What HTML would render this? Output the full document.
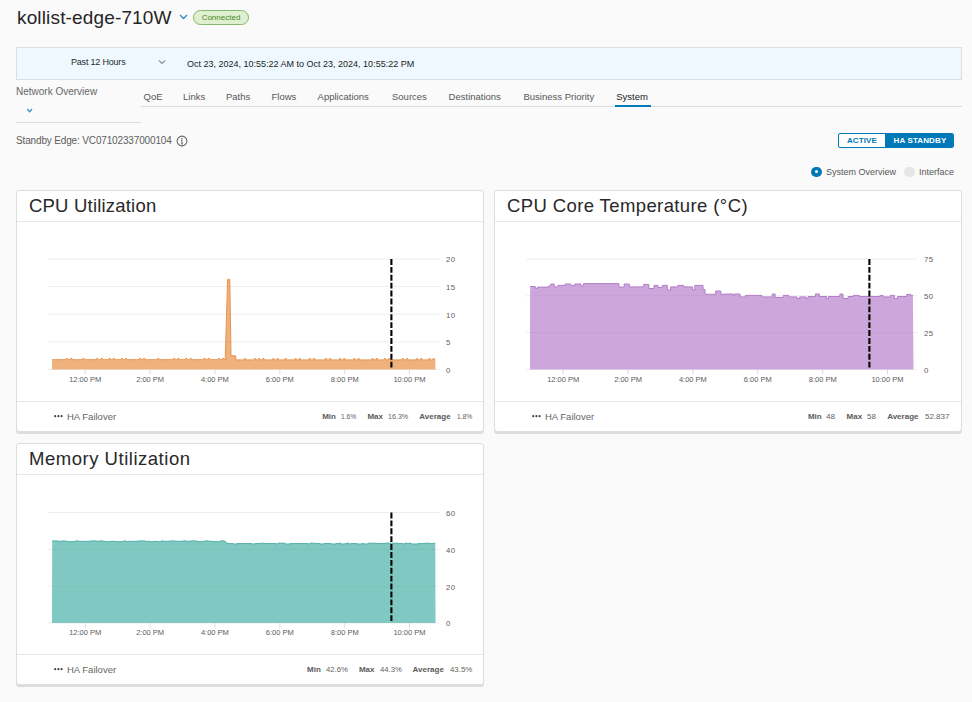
<!DOCTYPE html>
<html><head><meta charset="utf-8"><style>
*{margin:0;padding:0;box-sizing:border-box}
html,body{width:972px;height:702px;overflow:hidden;background:#fafafa;font-family:"Liberation Sans",sans-serif;color:#565656}
.abs{position:absolute;white-space:nowrap}
#title{left:17px;top:7px;font-size:19px;color:#262626;letter-spacing:0.15px}
#tchev{left:179px;top:13px}
#badge{left:193px;top:10px;width:56px;height:15px;border:1px solid #86b76a;border-radius:8px;background:#dff0d0;color:#4a8628;font-size:8px;line-height:13px;text-align:center}
#datebar{left:16px;top:47px;width:946px;height:33px;border:1px solid #d9dee2;background:#eef8fe}
#past{left:71px;top:57px;font-size:9px;color:#2b2b2b;letter-spacing:-0.2px}
#dchev{left:158px;top:59px}
#range{left:187px;top:58.5px;font-size:9px;color:#222}
#netov{left:16px;top:86px;font-size:10px;color:#666}
#nchev{left:26px;top:107px}
#nline{left:16px;top:122px;width:125px;height:1px;background:#dcdcdc}
#tabline{left:141px;top:106px;width:821px;height:1px;background:#dcdcdc}
.tab{top:91px;font-size:9.5px;color:#565656}
#sysline{left:615px;top:105px;width:36px;height:2px;background:#0079b8}
#standby{left:16px;top:134.5px;font-size:10px;letter-spacing:-0.15px;color:#5e5e5e}
#info{left:175.8px;top:134.7px}
#btng{left:838px;top:133px;width:116px;height:15px;border:1px solid #0079b8;border-radius:2px;background:#fff;overflow:hidden}
#btng .a{position:absolute;left:0;top:0;width:46px;height:13px;color:#0079b8;font-size:8px;font-weight:bold;letter-spacing:0.12px;line-height:13px;text-align:center}
#btng .s{position:absolute;left:46px;top:0;width:70px;height:13px;background:#0079b8;color:#fff;font-size:8px;font-weight:bold;letter-spacing:0.12px;line-height:13px;text-align:center}
#r1{left:811px;top:166.5px;width:10.5px;height:10.5px;border-radius:50%;background:#0079b8}
#r1:after{content:"";position:absolute;left:3.75px;top:3.75px;width:3px;height:3px;border-radius:50%;background:#fff}
#r1t{left:826px;top:166.5px;font-size:9px;color:#565656}
#r2{left:904px;top:166.5px;width:10.5px;height:10.5px;border-radius:50%;background:#e6e6e6}
#r2t{left:919px;top:166.5px;font-size:9px;color:#565656}
.card{position:absolute;width:468px;height:242px;background:#fff;border:1px solid #dddddd;border-radius:3px;box-shadow:0 2px 0 #dddddd}
.ctitle{position:absolute;left:12px;top:4px;font-size:18.5px;color:#282828;white-space:nowrap}
.sep1{position:absolute;left:0;top:30px;width:466px;height:1px;background:#e8e8e8}
.sep2{position:absolute;left:0;top:210px;width:466px;height:1px;background:#e8e8e8}
.yl{font-size:7.8px;letter-spacing:0.4px;fill:#606060;font-family:"Liberation Sans",sans-serif}
.xl{font-size:7.5px;fill:#5a5a5a;font-family:"Liberation Sans",sans-serif;text-anchor:middle}
.fail{position:absolute;left:50px;top:220px;font-size:9.5px;color:#666;white-space:nowrap}
.dots{position:absolute;left:37px;top:224px}
.sb,.sv{position:absolute;top:221.7px;font-size:8px;line-height:8px;white-space:nowrap;font-style:normal}
.sb{color:#5a5a5a;font-weight:bold}
.sv{color:#626262;transform-origin:0 50%}

</style></head><body>
<div id="title" class="abs">kollist-edge-710W</div>
<svg id="tchev" class="abs" width="9" height="8" viewBox="0 0 9 8"><path d="M1,2 L4.5,5.5 L8,2" fill="none" stroke="#2f8fc0" stroke-width="1.3"/></svg>
<div id="badge" class="abs">Connected</div>
<div id="datebar" class="abs"></div>
<div id="past" class="abs">Past 12 Hours</div>
<svg id="dchev" class="abs" width="8" height="7" viewBox="0 0 8 7"><path d="M1,1.5 L4,4.5 L7,1.5" fill="none" stroke="#444" stroke-width="1"/></svg>
<div id="range" class="abs">Oct 23, 2024, 10:55:22 AM to Oct 23, 2024, 10:55:22 PM</div>
<div id="netov" class="abs">Network Overview</div>
<svg id="nchev" class="abs" width="8" height="7" viewBox="0 0 8 7"><path d="M1.2,2 L3.6,4.7 L6,2" fill="none" stroke="#3d95c8" stroke-width="1.3"/></svg>
<div id="nline" class="abs"></div>
<div id="tabline" class="abs"></div>
<div class="abs tab" style="left:143.6px">QoE</div>
<div class="abs tab" style="left:183px">Links</div>
<div class="abs tab" style="left:226px">Paths</div>
<div class="abs tab" style="left:271.5px">Flows</div>
<div class="abs tab" style="left:317.6px">Applications</div>
<div class="abs tab" style="left:392px">Sources</div>
<div class="abs tab" style="left:448.6px">Destinations</div>
<div class="abs tab" style="left:523.5px">Business Priority</div>
<div class="abs tab" style="left:616.2px;color:#1b1b1b">System</div>
<div id="sysline" class="abs"></div>
<div id="standby" class="abs">Standby Edge: VC07102337000104</div>
<svg id="info" class="abs" width="12" height="12" viewBox="0 0 12 12"><circle cx="6" cy="6" r="4.9" fill="none" stroke="#666" stroke-width="1.1"/><circle cx="6" cy="3.7" r="0.8" fill="#666"/><path d="M5.1,5.3 H6 V9" fill="none" stroke="#666" stroke-width="1"/><path d="M5,8.9 H7" fill="none" stroke="#666" stroke-width="0.9"/></svg>
<div id="btng" class="abs"><div class="a">ACTIVE</div><div class="s">HA STANDBY</div></div>
<div id="r1" class="abs"></div><div id="r1t" class="abs">System Overview</div>
<div id="r2" class="abs"></div><div id="r2t" class="abs">Interface</div>

<div class="card" style="left:16px;top:190px"><div class="ctitle" style="letter-spacing:0.2px">CPU Utilization</div><div class="sep1"></div><svg class="ch" width="468" height="242" viewBox="0 0 468 242" style="position:absolute;left:-1px;top:-1px">
<g>
<line x1="32" y1="69.0" x2="423.5" y2="69.0" stroke="#ededed" stroke-width="1"/>
<text x="430" y="72.3" class="yl">20</text>
<line x1="32" y1="96.6" x2="423.5" y2="96.6" stroke="#ededed" stroke-width="1"/>
<text x="430" y="99.9" class="yl">15</text>
<line x1="32" y1="124.2" x2="423.5" y2="124.2" stroke="#ededed" stroke-width="1"/>
<text x="430" y="127.5" class="yl">10</text>
<line x1="32" y1="151.9" x2="423.5" y2="151.9" stroke="#ededed" stroke-width="1"/>
<text x="430" y="155.2" class="yl">5</text>
<line x1="32" y1="179.5" x2="423.5" y2="179.5" stroke="#ededed" stroke-width="1"/>
<text x="430" y="182.8" class="yl">0</text>
<path d="M36.0,179.5 L36.2,169.7 L50.2,169.7 L50.6,168.4 L51.8,168.4 L52.2,169.7 L54.4,169.7 L54.8,168.4 L56.0,168.4 L56.4,169.7 L56.4,169.7 L66.4,169.7 L66.8,168.4 L68.0,168.4 L68.4,169.7 L68.4,169.7 L80.4,169.7 L80.8,168.4 L82.0,168.4 L82.4,169.7 L84.6,169.7 L85.0,168.4 L86.2,168.4 L86.6,169.7 L86.6,169.7 L92.6,169.7 L93.0,168.4 L94.2,168.4 L94.6,169.7 L96.8,169.7 L97.2,168.4 L98.4,168.4 L98.8,169.7 L98.8,169.7 L104.8,169.7 L105.2,168.4 L106.4,168.4 L106.8,169.7 L109.0,169.7 L109.4,168.4 L110.6,168.4 L111.0,169.7 L111.0,169.7 L123.0,169.7 L123.4,168.4 L124.6,168.4 L125.0,169.7 L127.2,169.7 L127.6,168.4 L128.8,168.4 L129.2,169.7 L129.2,169.7 L141.2,169.7 L141.6,168.4 L142.8,168.4 L143.2,169.7 L143.2,169.7 L157.2,169.7 L157.6,168.4 L158.8,168.4 L159.2,169.7 L161.4,169.7 L161.8,168.4 L163.0,168.4 L163.4,169.7 L163.4,169.7 L169.4,169.7 L169.8,168.4 L171.0,168.4 L171.4,169.7 L173.6,169.7 L174.0,168.4 L175.2,168.4 L175.6,169.7 L175.6,169.7 L187.6,169.7 L188.0,168.4 L189.2,168.4 L189.6,169.7 L191.8,169.7 L192.2,168.4 L193.4,168.4 L193.8,169.7 L193.8,169.7 L201.8,169.7 L202.2,168.4 L203.4,168.4 L203.8,169.7 L206.0,169.7 L206.4,168.4 L207.6,168.4 L208.0,169.7 L210.2,169.7 L209.2,169.7 L211.6,89.4 L213.8,89.4 L215.0,165.8 L219.6,165.8 L219.8,169.9 L220.0,169.9 L228.0,169.9 L228.4,168.6 L229.6,168.6 L230.0,169.9 L230.0,169.9 L238.0,169.9 L238.4,168.6 L239.6,168.6 L240.0,169.9 L242.2,169.9 L242.6,168.6 L243.8,168.6 L244.2,169.9 L246.4,169.9 L246.8,168.6 L248.0,168.6 L248.4,169.9 L248.4,169.9 L256.4,169.9 L256.8,168.6 L258.0,168.6 L258.4,169.9 L260.6,169.9 L261.0,168.6 L262.2,168.6 L262.6,169.9 L262.6,169.9 L268.6,169.9 L269.0,168.6 L270.2,168.6 L270.6,169.9 L270.6,169.9 L278.6,169.9 L279.0,168.6 L280.2,168.6 L280.6,169.9 L282.8,169.9 L283.2,168.6 L284.4,168.6 L284.8,169.9 L284.8,169.9 L292.8,169.9 L293.2,168.6 L294.4,168.6 L294.8,169.9 L297.0,169.9 L297.4,168.6 L298.6,168.6 L299.0,169.9 L299.0,169.9 L309.0,169.9 L309.4,168.6 L310.6,168.6 L311.0,169.9 L313.2,169.9 L313.6,168.6 L314.8,168.6 L315.2,169.9 L315.2,169.9 L323.2,169.9 L323.6,168.6 L324.8,168.6 L325.2,169.9 L327.4,169.9 L327.8,168.6 L329.0,168.6 L329.4,169.9 L329.4,169.9 L337.4,169.9 L337.8,168.6 L339.0,168.6 L339.4,169.9 L341.6,169.9 L342.0,168.6 L343.2,168.6 L343.6,169.9 L343.6,169.9 L355.6,169.9 L356.0,168.6 L357.2,168.6 L357.6,169.9 L359.8,169.9 L360.2,168.6 L361.4,168.6 L361.8,169.9 L361.8,169.9 L367.8,169.9 L368.2,168.6 L369.4,168.6 L369.8,169.9 L372.0,169.9 L372.4,168.6 L373.6,168.6 L374.0,169.9 L374.0,169.9 L386.0,169.9 L386.4,168.6 L387.6,168.6 L388.0,169.9 L390.2,169.9 L390.6,168.6 L391.8,168.6 L392.2,169.9 L392.2,169.9 L400.2,169.9 L400.6,168.6 L401.8,168.6 L402.2,169.9 L404.4,169.9 L404.8,168.6 L406.0,168.6 L406.4,169.9 L406.4,169.9 L412.4,169.9 L412.8,168.6 L414.0,168.6 L414.4,169.9 L416.6,169.9 L417.0,168.6 L418.2,168.6 L418.6,169.9 L418.6,169.9 L419.3,169.9 L419.3,169.9 L419.5,179.5 Z" fill="#f0b27c"/>
<clipPath id="c347712782"><path d="M36.0,179.5 L36.2,169.7 L50.2,169.7 L50.6,168.4 L51.8,168.4 L52.2,169.7 L54.4,169.7 L54.8,168.4 L56.0,168.4 L56.4,169.7 L56.4,169.7 L66.4,169.7 L66.8,168.4 L68.0,168.4 L68.4,169.7 L68.4,169.7 L80.4,169.7 L80.8,168.4 L82.0,168.4 L82.4,169.7 L84.6,169.7 L85.0,168.4 L86.2,168.4 L86.6,169.7 L86.6,169.7 L92.6,169.7 L93.0,168.4 L94.2,168.4 L94.6,169.7 L96.8,169.7 L97.2,168.4 L98.4,168.4 L98.8,169.7 L98.8,169.7 L104.8,169.7 L105.2,168.4 L106.4,168.4 L106.8,169.7 L109.0,169.7 L109.4,168.4 L110.6,168.4 L111.0,169.7 L111.0,169.7 L123.0,169.7 L123.4,168.4 L124.6,168.4 L125.0,169.7 L127.2,169.7 L127.6,168.4 L128.8,168.4 L129.2,169.7 L129.2,169.7 L141.2,169.7 L141.6,168.4 L142.8,168.4 L143.2,169.7 L143.2,169.7 L157.2,169.7 L157.6,168.4 L158.8,168.4 L159.2,169.7 L161.4,169.7 L161.8,168.4 L163.0,168.4 L163.4,169.7 L163.4,169.7 L169.4,169.7 L169.8,168.4 L171.0,168.4 L171.4,169.7 L173.6,169.7 L174.0,168.4 L175.2,168.4 L175.6,169.7 L175.6,169.7 L187.6,169.7 L188.0,168.4 L189.2,168.4 L189.6,169.7 L191.8,169.7 L192.2,168.4 L193.4,168.4 L193.8,169.7 L193.8,169.7 L201.8,169.7 L202.2,168.4 L203.4,168.4 L203.8,169.7 L206.0,169.7 L206.4,168.4 L207.6,168.4 L208.0,169.7 L210.2,169.7 L209.2,169.7 L211.6,89.4 L213.8,89.4 L215.0,165.8 L219.6,165.8 L219.8,169.9 L220.0,169.9 L228.0,169.9 L228.4,168.6 L229.6,168.6 L230.0,169.9 L230.0,169.9 L238.0,169.9 L238.4,168.6 L239.6,168.6 L240.0,169.9 L242.2,169.9 L242.6,168.6 L243.8,168.6 L244.2,169.9 L246.4,169.9 L246.8,168.6 L248.0,168.6 L248.4,169.9 L248.4,169.9 L256.4,169.9 L256.8,168.6 L258.0,168.6 L258.4,169.9 L260.6,169.9 L261.0,168.6 L262.2,168.6 L262.6,169.9 L262.6,169.9 L268.6,169.9 L269.0,168.6 L270.2,168.6 L270.6,169.9 L270.6,169.9 L278.6,169.9 L279.0,168.6 L280.2,168.6 L280.6,169.9 L282.8,169.9 L283.2,168.6 L284.4,168.6 L284.8,169.9 L284.8,169.9 L292.8,169.9 L293.2,168.6 L294.4,168.6 L294.8,169.9 L297.0,169.9 L297.4,168.6 L298.6,168.6 L299.0,169.9 L299.0,169.9 L309.0,169.9 L309.4,168.6 L310.6,168.6 L311.0,169.9 L313.2,169.9 L313.6,168.6 L314.8,168.6 L315.2,169.9 L315.2,169.9 L323.2,169.9 L323.6,168.6 L324.8,168.6 L325.2,169.9 L327.4,169.9 L327.8,168.6 L329.0,168.6 L329.4,169.9 L329.4,169.9 L337.4,169.9 L337.8,168.6 L339.0,168.6 L339.4,169.9 L341.6,169.9 L342.0,168.6 L343.2,168.6 L343.6,169.9 L343.6,169.9 L355.6,169.9 L356.0,168.6 L357.2,168.6 L357.6,169.9 L359.8,169.9 L360.2,168.6 L361.4,168.6 L361.8,169.9 L361.8,169.9 L367.8,169.9 L368.2,168.6 L369.4,168.6 L369.8,169.9 L372.0,169.9 L372.4,168.6 L373.6,168.6 L374.0,169.9 L374.0,169.9 L386.0,169.9 L386.4,168.6 L387.6,168.6 L388.0,169.9 L390.2,169.9 L390.6,168.6 L391.8,168.6 L392.2,169.9 L392.2,169.9 L400.2,169.9 L400.6,168.6 L401.8,168.6 L402.2,169.9 L404.4,169.9 L404.8,168.6 L406.0,168.6 L406.4,169.9 L406.4,169.9 L412.4,169.9 L412.8,168.6 L414.0,168.6 L414.4,169.9 L416.6,169.9 L417.0,168.6 L418.2,168.6 L418.6,169.9 L418.6,169.9 L419.3,169.9 L419.3,169.9 L419.5,179.5 Z"/></clipPath><g clip-path="url(#c347712782)">
<line x1="36" y1="96.6" x2="419.5" y2="96.6" stroke="rgba(0,0,0,0.035)" stroke-width="1"/>
<line x1="36" y1="124.2" x2="419.5" y2="124.2" stroke="rgba(0,0,0,0.035)" stroke-width="1"/>
<line x1="36" y1="151.9" x2="419.5" y2="151.9" stroke="rgba(0,0,0,0.035)" stroke-width="1"/>
</g>
<path d="M36.2,169.7 L50.2,169.7 L50.6,168.4 L51.8,168.4 L52.2,169.7 L54.4,169.7 L54.8,168.4 L56.0,168.4 L56.4,169.7 L56.4,169.7 L66.4,169.7 L66.8,168.4 L68.0,168.4 L68.4,169.7 L68.4,169.7 L80.4,169.7 L80.8,168.4 L82.0,168.4 L82.4,169.7 L84.6,169.7 L85.0,168.4 L86.2,168.4 L86.6,169.7 L86.6,169.7 L92.6,169.7 L93.0,168.4 L94.2,168.4 L94.6,169.7 L96.8,169.7 L97.2,168.4 L98.4,168.4 L98.8,169.7 L98.8,169.7 L104.8,169.7 L105.2,168.4 L106.4,168.4 L106.8,169.7 L109.0,169.7 L109.4,168.4 L110.6,168.4 L111.0,169.7 L111.0,169.7 L123.0,169.7 L123.4,168.4 L124.6,168.4 L125.0,169.7 L127.2,169.7 L127.6,168.4 L128.8,168.4 L129.2,169.7 L129.2,169.7 L141.2,169.7 L141.6,168.4 L142.8,168.4 L143.2,169.7 L143.2,169.7 L157.2,169.7 L157.6,168.4 L158.8,168.4 L159.2,169.7 L161.4,169.7 L161.8,168.4 L163.0,168.4 L163.4,169.7 L163.4,169.7 L169.4,169.7 L169.8,168.4 L171.0,168.4 L171.4,169.7 L173.6,169.7 L174.0,168.4 L175.2,168.4 L175.6,169.7 L175.6,169.7 L187.6,169.7 L188.0,168.4 L189.2,168.4 L189.6,169.7 L191.8,169.7 L192.2,168.4 L193.4,168.4 L193.8,169.7 L193.8,169.7 L201.8,169.7 L202.2,168.4 L203.4,168.4 L203.8,169.7 L206.0,169.7 L206.4,168.4 L207.6,168.4 L208.0,169.7 L210.2,169.7 L209.2,169.7 L211.6,89.4 L213.8,89.4 L215.0,165.8 L219.6,165.8 L219.8,169.9 L220.0,169.9 L228.0,169.9 L228.4,168.6 L229.6,168.6 L230.0,169.9 L230.0,169.9 L238.0,169.9 L238.4,168.6 L239.6,168.6 L240.0,169.9 L242.2,169.9 L242.6,168.6 L243.8,168.6 L244.2,169.9 L246.4,169.9 L246.8,168.6 L248.0,168.6 L248.4,169.9 L248.4,169.9 L256.4,169.9 L256.8,168.6 L258.0,168.6 L258.4,169.9 L260.6,169.9 L261.0,168.6 L262.2,168.6 L262.6,169.9 L262.6,169.9 L268.6,169.9 L269.0,168.6 L270.2,168.6 L270.6,169.9 L270.6,169.9 L278.6,169.9 L279.0,168.6 L280.2,168.6 L280.6,169.9 L282.8,169.9 L283.2,168.6 L284.4,168.6 L284.8,169.9 L284.8,169.9 L292.8,169.9 L293.2,168.6 L294.4,168.6 L294.8,169.9 L297.0,169.9 L297.4,168.6 L298.6,168.6 L299.0,169.9 L299.0,169.9 L309.0,169.9 L309.4,168.6 L310.6,168.6 L311.0,169.9 L313.2,169.9 L313.6,168.6 L314.8,168.6 L315.2,169.9 L315.2,169.9 L323.2,169.9 L323.6,168.6 L324.8,168.6 L325.2,169.9 L327.4,169.9 L327.8,168.6 L329.0,168.6 L329.4,169.9 L329.4,169.9 L337.4,169.9 L337.8,168.6 L339.0,168.6 L339.4,169.9 L341.6,169.9 L342.0,168.6 L343.2,168.6 L343.6,169.9 L343.6,169.9 L355.6,169.9 L356.0,168.6 L357.2,168.6 L357.6,169.9 L359.8,169.9 L360.2,168.6 L361.4,168.6 L361.8,169.9 L361.8,169.9 L367.8,169.9 L368.2,168.6 L369.4,168.6 L369.8,169.9 L372.0,169.9 L372.4,168.6 L373.6,168.6 L374.0,169.9 L374.0,169.9 L386.0,169.9 L386.4,168.6 L387.6,168.6 L388.0,169.9 L390.2,169.9 L390.6,168.6 L391.8,168.6 L392.2,169.9 L392.2,169.9 L400.2,169.9 L400.6,168.6 L401.8,168.6 L402.2,169.9 L404.4,169.9 L404.8,168.6 L406.0,168.6 L406.4,169.9 L406.4,169.9 L412.4,169.9 L412.8,168.6 L414.0,168.6 L414.4,169.9 L416.6,169.9 L417.0,168.6 L418.2,168.6 L418.6,169.9 L418.6,169.9 L419.3,169.9 L419.3,169.9" fill="none" stroke="#e8944f" stroke-width="1"/>
<line x1="69.2" y1="179.5" x2="69.2" y2="184.5" stroke="#c9d6ea" stroke-width="0.8"/>
<text x="69.2" y="191.8" class="xl">12:00 PM</text>
<line x1="134.1" y1="179.5" x2="134.1" y2="184.5" stroke="#c9d6ea" stroke-width="0.8"/>
<text x="134.1" y="191.8" class="xl">2:00 PM</text>
<line x1="198.9" y1="179.5" x2="198.9" y2="184.5" stroke="#c9d6ea" stroke-width="0.8"/>
<text x="198.9" y="191.8" class="xl">4:00 PM</text>
<line x1="263.8" y1="179.5" x2="263.8" y2="184.5" stroke="#c9d6ea" stroke-width="0.8"/>
<text x="263.8" y="191.8" class="xl">6:00 PM</text>
<line x1="328.7" y1="179.5" x2="328.7" y2="184.5" stroke="#c9d6ea" stroke-width="0.8"/>
<text x="328.7" y="191.8" class="xl">8:00 PM</text>
<line x1="393.5" y1="179.5" x2="393.5" y2="184.5" stroke="#c9d6ea" stroke-width="0.8"/>
<text x="393.5" y="191.8" class="xl">10:00 PM</text>
<line x1="375.4" y1="69.0" x2="375.4" y2="179.5" stroke="#000" stroke-width="2.1" stroke-dasharray="5.9 2"/>
</g></svg><div class="sep2"></div><svg class="dots" width="9" height="3" viewBox="0 0 9 3"><circle cx="1.2" cy="1.2" r="1.1" fill="#444"/><circle cx="4.4" cy="1.2" r="1.1" fill="#444"/><circle cx="7.6" cy="1.2" r="1.1" fill="#444"/></svg><div class="fail">HA Failover</div><b class="sb" style="left:305.2px">Min</b><i class="sv" style="left:324.0px;transform:scaleX(0.839)">1.6%</i><b class="sb" style="left:350.4px">Max</b><i class="sv" style="left:370.8px;transform:scaleX(0.891)">16.3%</i><b class="sb" style="left:402.3px">Average</b><i class="sv" style="left:439.6px;transform:scaleX(0.834)">1.8%</i></div><div class="card" style="left:494px;top:190px"><div class="ctitle" style="letter-spacing:0.39px">CPU Core Temperature (&deg;C)</div><div class="sep1"></div><svg class="ch" width="468" height="242" viewBox="0 0 468 242" style="position:absolute;left:-1px;top:-1px">
<g>
<line x1="32" y1="69.0" x2="423.5" y2="69.0" stroke="#ededed" stroke-width="1"/>
<text x="430" y="72.3" class="yl">75</text>
<line x1="32" y1="105.8" x2="423.5" y2="105.8" stroke="#ededed" stroke-width="1"/>
<text x="430" y="109.1" class="yl">50</text>
<line x1="32" y1="142.7" x2="423.5" y2="142.7" stroke="#ededed" stroke-width="1"/>
<text x="430" y="146.0" class="yl">25</text>
<line x1="32" y1="179.5" x2="423.5" y2="179.5" stroke="#ededed" stroke-width="1"/>
<text x="430" y="182.8" class="yl">0</text>
<path d="M36.0,179.5 L36.1,96.5 L41.3,96.5 L41.3,98.5 L43.3,98.5 L43.3,97.1 L54.7,97.1 L54.7,96.0 L56.7,96.0 L56.7,94.0 L60.2,94.0 L60.2,96.9 L63.9,96.9 L63.9,95.4 L71.1,95.4 L71.1,94.0 L76.7,94.0 L76.7,95.4 L80.8,95.4 L80.8,94.0 L87.0,94.0 L87.0,96.0 L89.6,96.0 L89.6,93.6 L125.0,93.6 L125.0,97.1 L130.2,97.1 L130.2,94.0 L135.3,94.0 L135.3,96.9 L149.7,96.9 L149.7,94.4 L154.9,94.4 L154.9,98.5 L160.0,98.5 L160.0,95.4 L164.1,95.4 L164.1,97.5 L168.2,97.5 L168.2,95.4 L173.4,95.4 L173.4,100.0 L176.5,100.0 L176.5,96.9 L183.7,96.9 L183.7,95.4 L189.8,95.4 L189.8,96.9 L198.7,96.9 L198.7,100.0 L200.8,100.0 L200.8,95.4 L209.0,95.4 L209.0,99.5 L211.0,99.5 L211.0,104.3 L221.7,104.3 L221.7,101.0 L226.9,101.0 L226.9,104.3 L231.0,104.3 L231.0,104.0 L239.1,104.0 L239.1,105.4 L240.5,105.4 L240.5,104.0 L246.1,104.0 L246.1,106.9 L251.5,106.9 L251.5,105.4 L261.1,105.4 L261.1,105.4 L267.9,105.4 L267.9,106.9 L278.2,106.9 L278.2,104.0 L281.1,104.0 L281.1,107.5 L289.3,107.5 L289.3,105.4 L294.7,105.4 L294.7,106.9 L302.9,106.9 L302.9,108.5 L305.8,108.5 L305.8,106.9 L311.9,106.9 L311.9,108.5 L314.0,108.5 L314.0,106.5 L321.4,106.5 L321.4,104.0 L325.3,104.0 L325.3,106.5 L332.7,106.5 L332.7,108.5 L334.6,108.5 L334.6,106.5 L345.9,106.5 L345.9,104.0 L349.0,104.0 L349.0,108.5 L354.1,108.5 L354.1,106.5 L359.3,106.5 L359.3,105.4 L365.4,105.4 L365.4,106.5 L386.0,106.5 L386.0,105.4 L389.1,105.4 L389.1,106.9 L396.3,106.9 L396.3,105.4 L400.4,105.4 L400.4,108.5 L403.5,108.5 L403.5,106.5 L412.8,106.5 L412.8,104.4 L416.9,104.4 L416.9,105.4 L418.9,105.4 L419.5,179.5 Z" fill="#cda6dc"/>
<clipPath id="c161973069"><path d="M36.0,179.5 L36.1,96.5 L41.3,96.5 L41.3,98.5 L43.3,98.5 L43.3,97.1 L54.7,97.1 L54.7,96.0 L56.7,96.0 L56.7,94.0 L60.2,94.0 L60.2,96.9 L63.9,96.9 L63.9,95.4 L71.1,95.4 L71.1,94.0 L76.7,94.0 L76.7,95.4 L80.8,95.4 L80.8,94.0 L87.0,94.0 L87.0,96.0 L89.6,96.0 L89.6,93.6 L125.0,93.6 L125.0,97.1 L130.2,97.1 L130.2,94.0 L135.3,94.0 L135.3,96.9 L149.7,96.9 L149.7,94.4 L154.9,94.4 L154.9,98.5 L160.0,98.5 L160.0,95.4 L164.1,95.4 L164.1,97.5 L168.2,97.5 L168.2,95.4 L173.4,95.4 L173.4,100.0 L176.5,100.0 L176.5,96.9 L183.7,96.9 L183.7,95.4 L189.8,95.4 L189.8,96.9 L198.7,96.9 L198.7,100.0 L200.8,100.0 L200.8,95.4 L209.0,95.4 L209.0,99.5 L211.0,99.5 L211.0,104.3 L221.7,104.3 L221.7,101.0 L226.9,101.0 L226.9,104.3 L231.0,104.3 L231.0,104.0 L239.1,104.0 L239.1,105.4 L240.5,105.4 L240.5,104.0 L246.1,104.0 L246.1,106.9 L251.5,106.9 L251.5,105.4 L261.1,105.4 L261.1,105.4 L267.9,105.4 L267.9,106.9 L278.2,106.9 L278.2,104.0 L281.1,104.0 L281.1,107.5 L289.3,107.5 L289.3,105.4 L294.7,105.4 L294.7,106.9 L302.9,106.9 L302.9,108.5 L305.8,108.5 L305.8,106.9 L311.9,106.9 L311.9,108.5 L314.0,108.5 L314.0,106.5 L321.4,106.5 L321.4,104.0 L325.3,104.0 L325.3,106.5 L332.7,106.5 L332.7,108.5 L334.6,108.5 L334.6,106.5 L345.9,106.5 L345.9,104.0 L349.0,104.0 L349.0,108.5 L354.1,108.5 L354.1,106.5 L359.3,106.5 L359.3,105.4 L365.4,105.4 L365.4,106.5 L386.0,106.5 L386.0,105.4 L389.1,105.4 L389.1,106.9 L396.3,106.9 L396.3,105.4 L400.4,105.4 L400.4,108.5 L403.5,108.5 L403.5,106.5 L412.8,106.5 L412.8,104.4 L416.9,104.4 L416.9,105.4 L418.9,105.4 L419.5,179.5 Z"/></clipPath><g clip-path="url(#c161973069)">
<line x1="36" y1="105.8" x2="419.5" y2="105.8" stroke="rgba(0,0,0,0.035)" stroke-width="1"/>
<line x1="36" y1="142.7" x2="419.5" y2="142.7" stroke="rgba(0,0,0,0.035)" stroke-width="1"/>
</g>
<path d="M36.1,96.5 L41.3,96.5 L41.3,98.5 L43.3,98.5 L43.3,97.1 L54.7,97.1 L54.7,96.0 L56.7,96.0 L56.7,94.0 L60.2,94.0 L60.2,96.9 L63.9,96.9 L63.9,95.4 L71.1,95.4 L71.1,94.0 L76.7,94.0 L76.7,95.4 L80.8,95.4 L80.8,94.0 L87.0,94.0 L87.0,96.0 L89.6,96.0 L89.6,93.6 L125.0,93.6 L125.0,97.1 L130.2,97.1 L130.2,94.0 L135.3,94.0 L135.3,96.9 L149.7,96.9 L149.7,94.4 L154.9,94.4 L154.9,98.5 L160.0,98.5 L160.0,95.4 L164.1,95.4 L164.1,97.5 L168.2,97.5 L168.2,95.4 L173.4,95.4 L173.4,100.0 L176.5,100.0 L176.5,96.9 L183.7,96.9 L183.7,95.4 L189.8,95.4 L189.8,96.9 L198.7,96.9 L198.7,100.0 L200.8,100.0 L200.8,95.4 L209.0,95.4 L209.0,99.5 L211.0,99.5 L211.0,104.3 L221.7,104.3 L221.7,101.0 L226.9,101.0 L226.9,104.3 L231.0,104.3 L231.0,104.0 L239.1,104.0 L239.1,105.4 L240.5,105.4 L240.5,104.0 L246.1,104.0 L246.1,106.9 L251.5,106.9 L251.5,105.4 L261.1,105.4 L261.1,105.4 L267.9,105.4 L267.9,106.9 L278.2,106.9 L278.2,104.0 L281.1,104.0 L281.1,107.5 L289.3,107.5 L289.3,105.4 L294.7,105.4 L294.7,106.9 L302.9,106.9 L302.9,108.5 L305.8,108.5 L305.8,106.9 L311.9,106.9 L311.9,108.5 L314.0,108.5 L314.0,106.5 L321.4,106.5 L321.4,104.0 L325.3,104.0 L325.3,106.5 L332.7,106.5 L332.7,108.5 L334.6,108.5 L334.6,106.5 L345.9,106.5 L345.9,104.0 L349.0,104.0 L349.0,108.5 L354.1,108.5 L354.1,106.5 L359.3,106.5 L359.3,105.4 L365.4,105.4 L365.4,106.5 L386.0,106.5 L386.0,105.4 L389.1,105.4 L389.1,106.9 L396.3,106.9 L396.3,105.4 L400.4,105.4 L400.4,108.5 L403.5,108.5 L403.5,106.5 L412.8,106.5 L412.8,104.4 L416.9,104.4 L416.9,105.4 L418.9,105.4" fill="none" stroke="#b27ec8" stroke-width="1"/>
<line x1="69.2" y1="179.5" x2="69.2" y2="184.5" stroke="#c9d6ea" stroke-width="0.8"/>
<text x="69.2" y="191.8" class="xl">12:00 PM</text>
<line x1="134.1" y1="179.5" x2="134.1" y2="184.5" stroke="#c9d6ea" stroke-width="0.8"/>
<text x="134.1" y="191.8" class="xl">2:00 PM</text>
<line x1="198.9" y1="179.5" x2="198.9" y2="184.5" stroke="#c9d6ea" stroke-width="0.8"/>
<text x="198.9" y="191.8" class="xl">4:00 PM</text>
<line x1="263.8" y1="179.5" x2="263.8" y2="184.5" stroke="#c9d6ea" stroke-width="0.8"/>
<text x="263.8" y="191.8" class="xl">6:00 PM</text>
<line x1="328.7" y1="179.5" x2="328.7" y2="184.5" stroke="#c9d6ea" stroke-width="0.8"/>
<text x="328.7" y="191.8" class="xl">8:00 PM</text>
<line x1="393.5" y1="179.5" x2="393.5" y2="184.5" stroke="#c9d6ea" stroke-width="0.8"/>
<text x="393.5" y="191.8" class="xl">10:00 PM</text>
<line x1="375.4" y1="69.0" x2="375.4" y2="179.5" stroke="#000" stroke-width="2.1" stroke-dasharray="5.9 2"/>
</g></svg><div class="sep2"></div><svg class="dots" width="9" height="3" viewBox="0 0 9 3"><circle cx="1.2" cy="1.2" r="1.1" fill="#444"/><circle cx="4.4" cy="1.2" r="1.1" fill="#444"/><circle cx="7.6" cy="1.2" r="1.1" fill="#444"/></svg><div class="fail">HA Failover</div><b class="sb" style="left:312.9px">Min</b><i class="sv" style="left:331.3px;transform:scaleX(1.023)">48</i><b class="sb" style="left:351.6px">Max</b><i class="sv" style="left:372.2px;transform:scaleX(0.989)">58</i><b class="sb" style="left:392.2px">Average</b><i class="sv" style="left:429.6px;transform:scaleX(0.997)">52.837</i></div><div class="card" style="left:16px;top:443px"><div class="ctitle" style="letter-spacing:0.52px">Memory Utilization</div><div class="sep1"></div><svg class="ch" width="468" height="242" viewBox="0 0 468 242" style="position:absolute;left:-1px;top:-1px">
<g>
<line x1="32" y1="69.5" x2="423.5" y2="69.5" stroke="#ededed" stroke-width="1"/>
<text x="430" y="72.8" class="yl">60</text>
<line x1="32" y1="106.3" x2="423.5" y2="106.3" stroke="#ededed" stroke-width="1"/>
<text x="430" y="109.6" class="yl">40</text>
<line x1="32" y1="143.2" x2="423.5" y2="143.2" stroke="#ededed" stroke-width="1"/>
<text x="430" y="146.5" class="yl">20</text>
<line x1="32" y1="180.0" x2="423.5" y2="180.0" stroke="#ededed" stroke-width="1"/>
<text x="430" y="183.3" class="yl">0</text>
<path d="M36.0,180.0 L36.2,97.9 L41.2,97.9 L41.2,98.3 L46.2,98.3 L46.2,97.9 L49.2,97.9 L49.2,98.3 L52.2,98.3 L52.2,98.7 L57.2,98.7 L57.2,98.3 L60.2,98.3 L60.2,97.9 L62.2,97.9 L62.2,98.3 L67.2,98.3 L67.2,98.3 L69.2,98.3 L69.2,98.3 L71.2,98.3 L71.2,98.3 L74.2,98.3 L74.2,97.9 L76.2,97.9 L76.2,97.9 L80.2,97.9 L80.2,98.3 L83.2,98.3 L83.2,97.9 L87.2,97.9 L87.2,98.3 L89.2,98.3 L89.2,98.7 L94.2,98.7 L94.2,98.3 L99.2,98.3 L99.2,98.7 L103.2,98.7 L103.2,98.7 L106.2,98.7 L106.2,98.3 L108.2,98.3 L108.2,97.9 L110.2,97.9 L110.2,98.7 L112.2,98.7 L112.2,98.3 L117.2,98.3 L117.2,98.3 L119.2,98.3 L119.2,98.3 L122.2,98.3 L122.2,97.9 L124.2,97.9 L124.2,97.9 L129.2,97.9 L129.2,98.3 L134.2,98.3 L134.2,98.7 L137.2,98.7 L137.2,98.3 L141.2,98.3 L141.2,98.7 L145.2,98.7 L145.2,97.9 L147.2,97.9 L147.2,98.3 L149.2,98.3 L149.2,98.3 L152.2,98.3 L152.2,98.3 L154.2,98.3 L154.2,97.9 L159.2,97.9 L159.2,98.3 L162.2,98.3 L162.2,98.3 L167.2,98.3 L167.2,97.9 L170.2,97.9 L170.2,98.3 L175.2,98.3 L175.2,97.9 L180.2,97.9 L180.2,98.3 L183.2,98.3 L183.2,98.7 L187.2,98.7 L187.2,98.3 L189.2,98.3 L189.2,97.9 L192.2,97.9 L192.2,98.3 L194.2,98.3 L194.2,98.3 L197.2,98.3 L197.2,98.7 L202.2,98.7 L202.2,98.7 L204.2,98.7 L204.2,97.9 L208.2,97.9 L208.2,98.3 L209.0,98.3 L212.0,100.9 L212.0,100.6 L214.0,100.6 L214.0,100.6 L217.0,100.6 L217.0,101.0 L221.0,101.0 L221.0,100.6 L226.0,100.6 L226.0,100.6 L231.0,100.6 L231.0,100.6 L236.0,100.6 L236.0,101.0 L239.0,101.0 L239.0,100.6 L242.0,100.6 L242.0,100.6 L245.0,100.6 L245.0,100.2 L248.0,100.2 L248.0,100.6 L253.0,100.6 L253.0,100.6 L258.0,100.6 L258.0,100.6 L260.0,100.6 L260.0,101.0 L262.0,101.0 L262.0,100.2 L265.0,100.2 L265.0,100.2 L269.0,100.2 L269.0,101.0 L274.0,101.0 L274.0,100.6 L277.0,100.6 L277.0,100.6 L280.0,100.6 L280.0,100.6 L285.0,100.6 L285.0,100.6 L289.0,100.6 L289.0,100.6 L292.0,100.6 L292.0,101.0 L294.0,101.0 L294.0,100.2 L299.0,100.2 L299.0,100.6 L302.0,100.6 L302.0,100.6 L304.0,100.6 L304.0,101.0 L308.0,101.0 L308.0,100.6 L311.0,100.6 L311.0,100.6 L315.0,100.6 L315.0,101.0 L320.0,101.0 L320.0,100.6 L323.0,100.6 L323.0,100.2 L325.0,100.2 L325.0,101.0 L329.0,101.0 L329.0,100.6 L331.0,100.6 L331.0,100.2 L333.0,100.2 L333.0,101.0 L335.0,101.0 L335.0,100.6 L339.0,100.6 L339.0,100.6 L341.0,100.6 L341.0,101.0 L346.0,101.0 L346.0,100.6 L348.0,100.6 L348.0,101.0 L352.0,101.0 L352.0,100.2 L354.0,100.2 L354.0,100.2 L356.0,100.2 L356.0,100.2 L358.0,100.2 L358.0,100.2 L360.0,100.2 L360.0,100.6 L365.0,100.6 L365.0,100.6 L367.0,100.6 L367.0,100.6 L369.0,100.6 L369.0,100.2 L373.0,100.2 L373.0,100.2 L377.0,100.2 L377.0,100.2 L382.0,100.2 L382.0,100.6 L387.0,100.6 L387.0,101.0 L389.0,101.0 L389.0,100.2 L391.0,100.2 L391.0,100.6 L393.0,100.6 L393.0,100.2 L395.0,100.2 L395.0,101.0 L400.0,101.0 L400.0,101.0 L402.0,101.0 L402.0,100.6 L406.0,100.6 L406.0,100.6 L409.0,100.6 L409.0,100.2 L413.0,100.2 L413.0,100.6 L418.0,100.6 L418.0,100.2 L419.3,100.2 L419.5,180.0 Z" fill="#80c9c2"/>
<clipPath id="c423938499"><path d="M36.0,180.0 L36.2,97.9 L41.2,97.9 L41.2,98.3 L46.2,98.3 L46.2,97.9 L49.2,97.9 L49.2,98.3 L52.2,98.3 L52.2,98.7 L57.2,98.7 L57.2,98.3 L60.2,98.3 L60.2,97.9 L62.2,97.9 L62.2,98.3 L67.2,98.3 L67.2,98.3 L69.2,98.3 L69.2,98.3 L71.2,98.3 L71.2,98.3 L74.2,98.3 L74.2,97.9 L76.2,97.9 L76.2,97.9 L80.2,97.9 L80.2,98.3 L83.2,98.3 L83.2,97.9 L87.2,97.9 L87.2,98.3 L89.2,98.3 L89.2,98.7 L94.2,98.7 L94.2,98.3 L99.2,98.3 L99.2,98.7 L103.2,98.7 L103.2,98.7 L106.2,98.7 L106.2,98.3 L108.2,98.3 L108.2,97.9 L110.2,97.9 L110.2,98.7 L112.2,98.7 L112.2,98.3 L117.2,98.3 L117.2,98.3 L119.2,98.3 L119.2,98.3 L122.2,98.3 L122.2,97.9 L124.2,97.9 L124.2,97.9 L129.2,97.9 L129.2,98.3 L134.2,98.3 L134.2,98.7 L137.2,98.7 L137.2,98.3 L141.2,98.3 L141.2,98.7 L145.2,98.7 L145.2,97.9 L147.2,97.9 L147.2,98.3 L149.2,98.3 L149.2,98.3 L152.2,98.3 L152.2,98.3 L154.2,98.3 L154.2,97.9 L159.2,97.9 L159.2,98.3 L162.2,98.3 L162.2,98.3 L167.2,98.3 L167.2,97.9 L170.2,97.9 L170.2,98.3 L175.2,98.3 L175.2,97.9 L180.2,97.9 L180.2,98.3 L183.2,98.3 L183.2,98.7 L187.2,98.7 L187.2,98.3 L189.2,98.3 L189.2,97.9 L192.2,97.9 L192.2,98.3 L194.2,98.3 L194.2,98.3 L197.2,98.3 L197.2,98.7 L202.2,98.7 L202.2,98.7 L204.2,98.7 L204.2,97.9 L208.2,97.9 L208.2,98.3 L209.0,98.3 L212.0,100.9 L212.0,100.6 L214.0,100.6 L214.0,100.6 L217.0,100.6 L217.0,101.0 L221.0,101.0 L221.0,100.6 L226.0,100.6 L226.0,100.6 L231.0,100.6 L231.0,100.6 L236.0,100.6 L236.0,101.0 L239.0,101.0 L239.0,100.6 L242.0,100.6 L242.0,100.6 L245.0,100.6 L245.0,100.2 L248.0,100.2 L248.0,100.6 L253.0,100.6 L253.0,100.6 L258.0,100.6 L258.0,100.6 L260.0,100.6 L260.0,101.0 L262.0,101.0 L262.0,100.2 L265.0,100.2 L265.0,100.2 L269.0,100.2 L269.0,101.0 L274.0,101.0 L274.0,100.6 L277.0,100.6 L277.0,100.6 L280.0,100.6 L280.0,100.6 L285.0,100.6 L285.0,100.6 L289.0,100.6 L289.0,100.6 L292.0,100.6 L292.0,101.0 L294.0,101.0 L294.0,100.2 L299.0,100.2 L299.0,100.6 L302.0,100.6 L302.0,100.6 L304.0,100.6 L304.0,101.0 L308.0,101.0 L308.0,100.6 L311.0,100.6 L311.0,100.6 L315.0,100.6 L315.0,101.0 L320.0,101.0 L320.0,100.6 L323.0,100.6 L323.0,100.2 L325.0,100.2 L325.0,101.0 L329.0,101.0 L329.0,100.6 L331.0,100.6 L331.0,100.2 L333.0,100.2 L333.0,101.0 L335.0,101.0 L335.0,100.6 L339.0,100.6 L339.0,100.6 L341.0,100.6 L341.0,101.0 L346.0,101.0 L346.0,100.6 L348.0,100.6 L348.0,101.0 L352.0,101.0 L352.0,100.2 L354.0,100.2 L354.0,100.2 L356.0,100.2 L356.0,100.2 L358.0,100.2 L358.0,100.2 L360.0,100.2 L360.0,100.6 L365.0,100.6 L365.0,100.6 L367.0,100.6 L367.0,100.6 L369.0,100.6 L369.0,100.2 L373.0,100.2 L373.0,100.2 L377.0,100.2 L377.0,100.2 L382.0,100.2 L382.0,100.6 L387.0,100.6 L387.0,101.0 L389.0,101.0 L389.0,100.2 L391.0,100.2 L391.0,100.6 L393.0,100.6 L393.0,100.2 L395.0,100.2 L395.0,101.0 L400.0,101.0 L400.0,101.0 L402.0,101.0 L402.0,100.6 L406.0,100.6 L406.0,100.6 L409.0,100.6 L409.0,100.2 L413.0,100.2 L413.0,100.6 L418.0,100.6 L418.0,100.2 L419.3,100.2 L419.5,180.0 Z"/></clipPath><g clip-path="url(#c423938499)">
<line x1="36" y1="106.3" x2="419.5" y2="106.3" stroke="rgba(0,0,0,0.035)" stroke-width="1"/>
<line x1="36" y1="143.2" x2="419.5" y2="143.2" stroke="rgba(0,0,0,0.035)" stroke-width="1"/>
</g>
<path d="M36.2,97.9 L41.2,97.9 L41.2,98.3 L46.2,98.3 L46.2,97.9 L49.2,97.9 L49.2,98.3 L52.2,98.3 L52.2,98.7 L57.2,98.7 L57.2,98.3 L60.2,98.3 L60.2,97.9 L62.2,97.9 L62.2,98.3 L67.2,98.3 L67.2,98.3 L69.2,98.3 L69.2,98.3 L71.2,98.3 L71.2,98.3 L74.2,98.3 L74.2,97.9 L76.2,97.9 L76.2,97.9 L80.2,97.9 L80.2,98.3 L83.2,98.3 L83.2,97.9 L87.2,97.9 L87.2,98.3 L89.2,98.3 L89.2,98.7 L94.2,98.7 L94.2,98.3 L99.2,98.3 L99.2,98.7 L103.2,98.7 L103.2,98.7 L106.2,98.7 L106.2,98.3 L108.2,98.3 L108.2,97.9 L110.2,97.9 L110.2,98.7 L112.2,98.7 L112.2,98.3 L117.2,98.3 L117.2,98.3 L119.2,98.3 L119.2,98.3 L122.2,98.3 L122.2,97.9 L124.2,97.9 L124.2,97.9 L129.2,97.9 L129.2,98.3 L134.2,98.3 L134.2,98.7 L137.2,98.7 L137.2,98.3 L141.2,98.3 L141.2,98.7 L145.2,98.7 L145.2,97.9 L147.2,97.9 L147.2,98.3 L149.2,98.3 L149.2,98.3 L152.2,98.3 L152.2,98.3 L154.2,98.3 L154.2,97.9 L159.2,97.9 L159.2,98.3 L162.2,98.3 L162.2,98.3 L167.2,98.3 L167.2,97.9 L170.2,97.9 L170.2,98.3 L175.2,98.3 L175.2,97.9 L180.2,97.9 L180.2,98.3 L183.2,98.3 L183.2,98.7 L187.2,98.7 L187.2,98.3 L189.2,98.3 L189.2,97.9 L192.2,97.9 L192.2,98.3 L194.2,98.3 L194.2,98.3 L197.2,98.3 L197.2,98.7 L202.2,98.7 L202.2,98.7 L204.2,98.7 L204.2,97.9 L208.2,97.9 L208.2,98.3 L209.0,98.3 L212.0,100.9 L212.0,100.6 L214.0,100.6 L214.0,100.6 L217.0,100.6 L217.0,101.0 L221.0,101.0 L221.0,100.6 L226.0,100.6 L226.0,100.6 L231.0,100.6 L231.0,100.6 L236.0,100.6 L236.0,101.0 L239.0,101.0 L239.0,100.6 L242.0,100.6 L242.0,100.6 L245.0,100.6 L245.0,100.2 L248.0,100.2 L248.0,100.6 L253.0,100.6 L253.0,100.6 L258.0,100.6 L258.0,100.6 L260.0,100.6 L260.0,101.0 L262.0,101.0 L262.0,100.2 L265.0,100.2 L265.0,100.2 L269.0,100.2 L269.0,101.0 L274.0,101.0 L274.0,100.6 L277.0,100.6 L277.0,100.6 L280.0,100.6 L280.0,100.6 L285.0,100.6 L285.0,100.6 L289.0,100.6 L289.0,100.6 L292.0,100.6 L292.0,101.0 L294.0,101.0 L294.0,100.2 L299.0,100.2 L299.0,100.6 L302.0,100.6 L302.0,100.6 L304.0,100.6 L304.0,101.0 L308.0,101.0 L308.0,100.6 L311.0,100.6 L311.0,100.6 L315.0,100.6 L315.0,101.0 L320.0,101.0 L320.0,100.6 L323.0,100.6 L323.0,100.2 L325.0,100.2 L325.0,101.0 L329.0,101.0 L329.0,100.6 L331.0,100.6 L331.0,100.2 L333.0,100.2 L333.0,101.0 L335.0,101.0 L335.0,100.6 L339.0,100.6 L339.0,100.6 L341.0,100.6 L341.0,101.0 L346.0,101.0 L346.0,100.6 L348.0,100.6 L348.0,101.0 L352.0,101.0 L352.0,100.2 L354.0,100.2 L354.0,100.2 L356.0,100.2 L356.0,100.2 L358.0,100.2 L358.0,100.2 L360.0,100.2 L360.0,100.6 L365.0,100.6 L365.0,100.6 L367.0,100.6 L367.0,100.6 L369.0,100.6 L369.0,100.2 L373.0,100.2 L373.0,100.2 L377.0,100.2 L377.0,100.2 L382.0,100.2 L382.0,100.6 L387.0,100.6 L387.0,101.0 L389.0,101.0 L389.0,100.2 L391.0,100.2 L391.0,100.6 L393.0,100.6 L393.0,100.2 L395.0,100.2 L395.0,101.0 L400.0,101.0 L400.0,101.0 L402.0,101.0 L402.0,100.6 L406.0,100.6 L406.0,100.6 L409.0,100.6 L409.0,100.2 L413.0,100.2 L413.0,100.6 L418.0,100.6 L418.0,100.2 L419.3,100.2" fill="none" stroke="#4fb0a7" stroke-width="1"/>
<line x1="69.2" y1="180.0" x2="69.2" y2="185.0" stroke="#c9d6ea" stroke-width="0.8"/>
<text x="69.2" y="192.3" class="xl">12:00 PM</text>
<line x1="134.1" y1="180.0" x2="134.1" y2="185.0" stroke="#c9d6ea" stroke-width="0.8"/>
<text x="134.1" y="192.3" class="xl">2:00 PM</text>
<line x1="198.9" y1="180.0" x2="198.9" y2="185.0" stroke="#c9d6ea" stroke-width="0.8"/>
<text x="198.9" y="192.3" class="xl">4:00 PM</text>
<line x1="263.8" y1="180.0" x2="263.8" y2="185.0" stroke="#c9d6ea" stroke-width="0.8"/>
<text x="263.8" y="192.3" class="xl">6:00 PM</text>
<line x1="328.7" y1="180.0" x2="328.7" y2="185.0" stroke="#c9d6ea" stroke-width="0.8"/>
<text x="328.7" y="192.3" class="xl">8:00 PM</text>
<line x1="393.5" y1="180.0" x2="393.5" y2="185.0" stroke="#c9d6ea" stroke-width="0.8"/>
<text x="393.5" y="192.3" class="xl">10:00 PM</text>
<line x1="375.4" y1="69.5" x2="375.4" y2="180.0" stroke="#000" stroke-width="2.1" stroke-dasharray="5.9 2"/>
</g></svg><div class="sep2"></div><svg class="dots" width="9" height="3" viewBox="0 0 9 3"><circle cx="1.2" cy="1.2" r="1.1" fill="#444"/><circle cx="4.4" cy="1.2" r="1.1" fill="#444"/><circle cx="7.6" cy="1.2" r="1.1" fill="#444"/></svg><div class="fail">HA Failover</div><b class="sb" style="left:290.0px">Min</b><i class="sv" style="left:308.9px;transform:scaleX(0.966)">42.6%</i><b class="sb" style="left:341.9px">Max</b><i class="sv" style="left:362.6px;transform:scaleX(0.966)">44.3%</i><b class="sb" style="left:395.6px">Average</b><i class="sv" style="left:432.6px;transform:scaleX(0.983)">43.5%</i></div>
</body></html>
